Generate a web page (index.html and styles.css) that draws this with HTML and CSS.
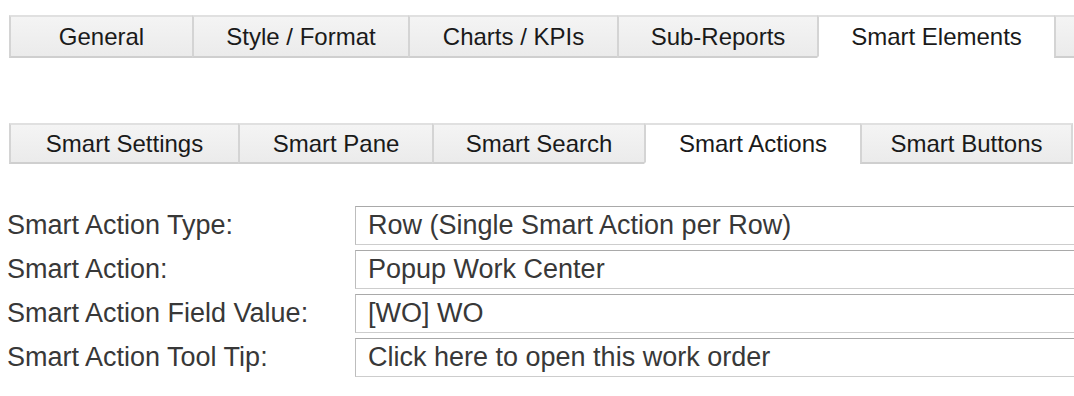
FILE: index.html
```html
<!DOCTYPE html>
<html lang="en">
<head>
<meta charset="utf-8">
<title>Smart Actions</title>
<link rel="stylesheet" href="styles.css">
</head>
<body>
<div class="page">
  <div class="tabs tabs-main">
    <div class="tab">General</div>
    <div class="tab">Style / Format</div>
    <div class="tab">Charts / KPIs</div>
    <div class="tab">Sub-Reports</div>
    <div class="tab active">Smart Elements</div>
    <div class="tab"></div>
  </div>

  <div class="tabs tabs-sub">
    <div class="tab">Smart Settings</div>
    <div class="tab">Smart Pane</div>
    <div class="tab">Smart Search</div>
    <div class="tab active">Smart Actions</div>
    <div class="tab">Smart Buttons</div>
  </div>

  <div class="form">
    <div class="label">Smart Action Type:</div>
    <div class="field">Row (Single Smart Action per Row)</div>
    <div class="label">Smart Action:</div>
    <div class="field">Popup Work Center</div>
    <div class="label">Smart Action Field Value:</div>
    <div class="field">[WO] WO</div>
    <div class="label">Smart Action Tool Tip:</div>
    <div class="field">Click here to open this work order</div>
  </div>
</div>
</body>
</html>
```

FILE: styles.css
```css
html, body {
  margin: 0;
  padding: 0;
  background: #ffffff;
  overflow: hidden;
}

.page {
  width: 1074px;
  height: 396px;
  overflow: hidden;
  padding: 15px 0 0 9px;
  box-sizing: border-box;
  font-family: "Liberation Sans", Arial, sans-serif;
}

.tabs {
  display: flex;
  flex-wrap: nowrap;
  width: 1200px;
}

.tab {
  flex: 0 0 auto;
  box-sizing: border-box;
  height: 43px;
  display: flex;
  align-items: center;
  justify-content: center;
  font-size: 24px;
  color: #1a1a1a;
  background: linear-gradient(#f4f4f4, #ebebeb);
  border-top: 2px solid #e0e0e0;
  border-bottom: 2px solid #cfcfcf;
  border-left: 2px solid #d4d4d4;
  white-space: nowrap;
}

.tab.active {
  background: #ffffff;
  border-bottom: 2px solid #ffffff;
}

.tabs-main .tab:nth-child(1) { width: 183px; }
.tabs-main .tab:nth-child(2) { width: 216px; }
.tabs-main .tab:nth-child(3) { width: 209px; }
.tabs-main .tab:nth-child(4) { width: 200px; }
.tabs-main .tab:nth-child(5) { width: 237px; }
.tabs-main .tab:nth-child(6) { width: 120px; }

.tabs-sub {
  margin-top: 65px;
}

.tabs-sub .tab {
  height: 41px;
}

.tabs-sub .tab:nth-child(1) { width: 229px; }
.tabs-sub .tab:nth-child(2) { width: 194px; }
.tabs-sub .tab:nth-child(3) { width: 212px; }
.tabs-sub .tab:nth-child(4) { width: 216px; }
.tabs-sub .tab:nth-child(5) {
  width: 213px;
  border-right: 2px solid #d8d8d8;
}

.form {
  margin: 42px 0 0 -2px;
  display: grid;
  grid-template-columns: 348px 760px;
  row-gap: 5px;
  align-items: center;
}

.label {
  font-size: 27px;
  color: #383838;
  white-space: nowrap;
}

.field {
  box-sizing: border-box;
  height: 39px;
  border: 1px solid #cdcdcd;
  border-top-color: #a9a9a9;
  border-left-color: #bdbdbd;
  padding: 0 12px;
  display: flex;
  align-items: center;
  font-size: 27px;
  color: #383838;
  white-space: nowrap;
}
```
